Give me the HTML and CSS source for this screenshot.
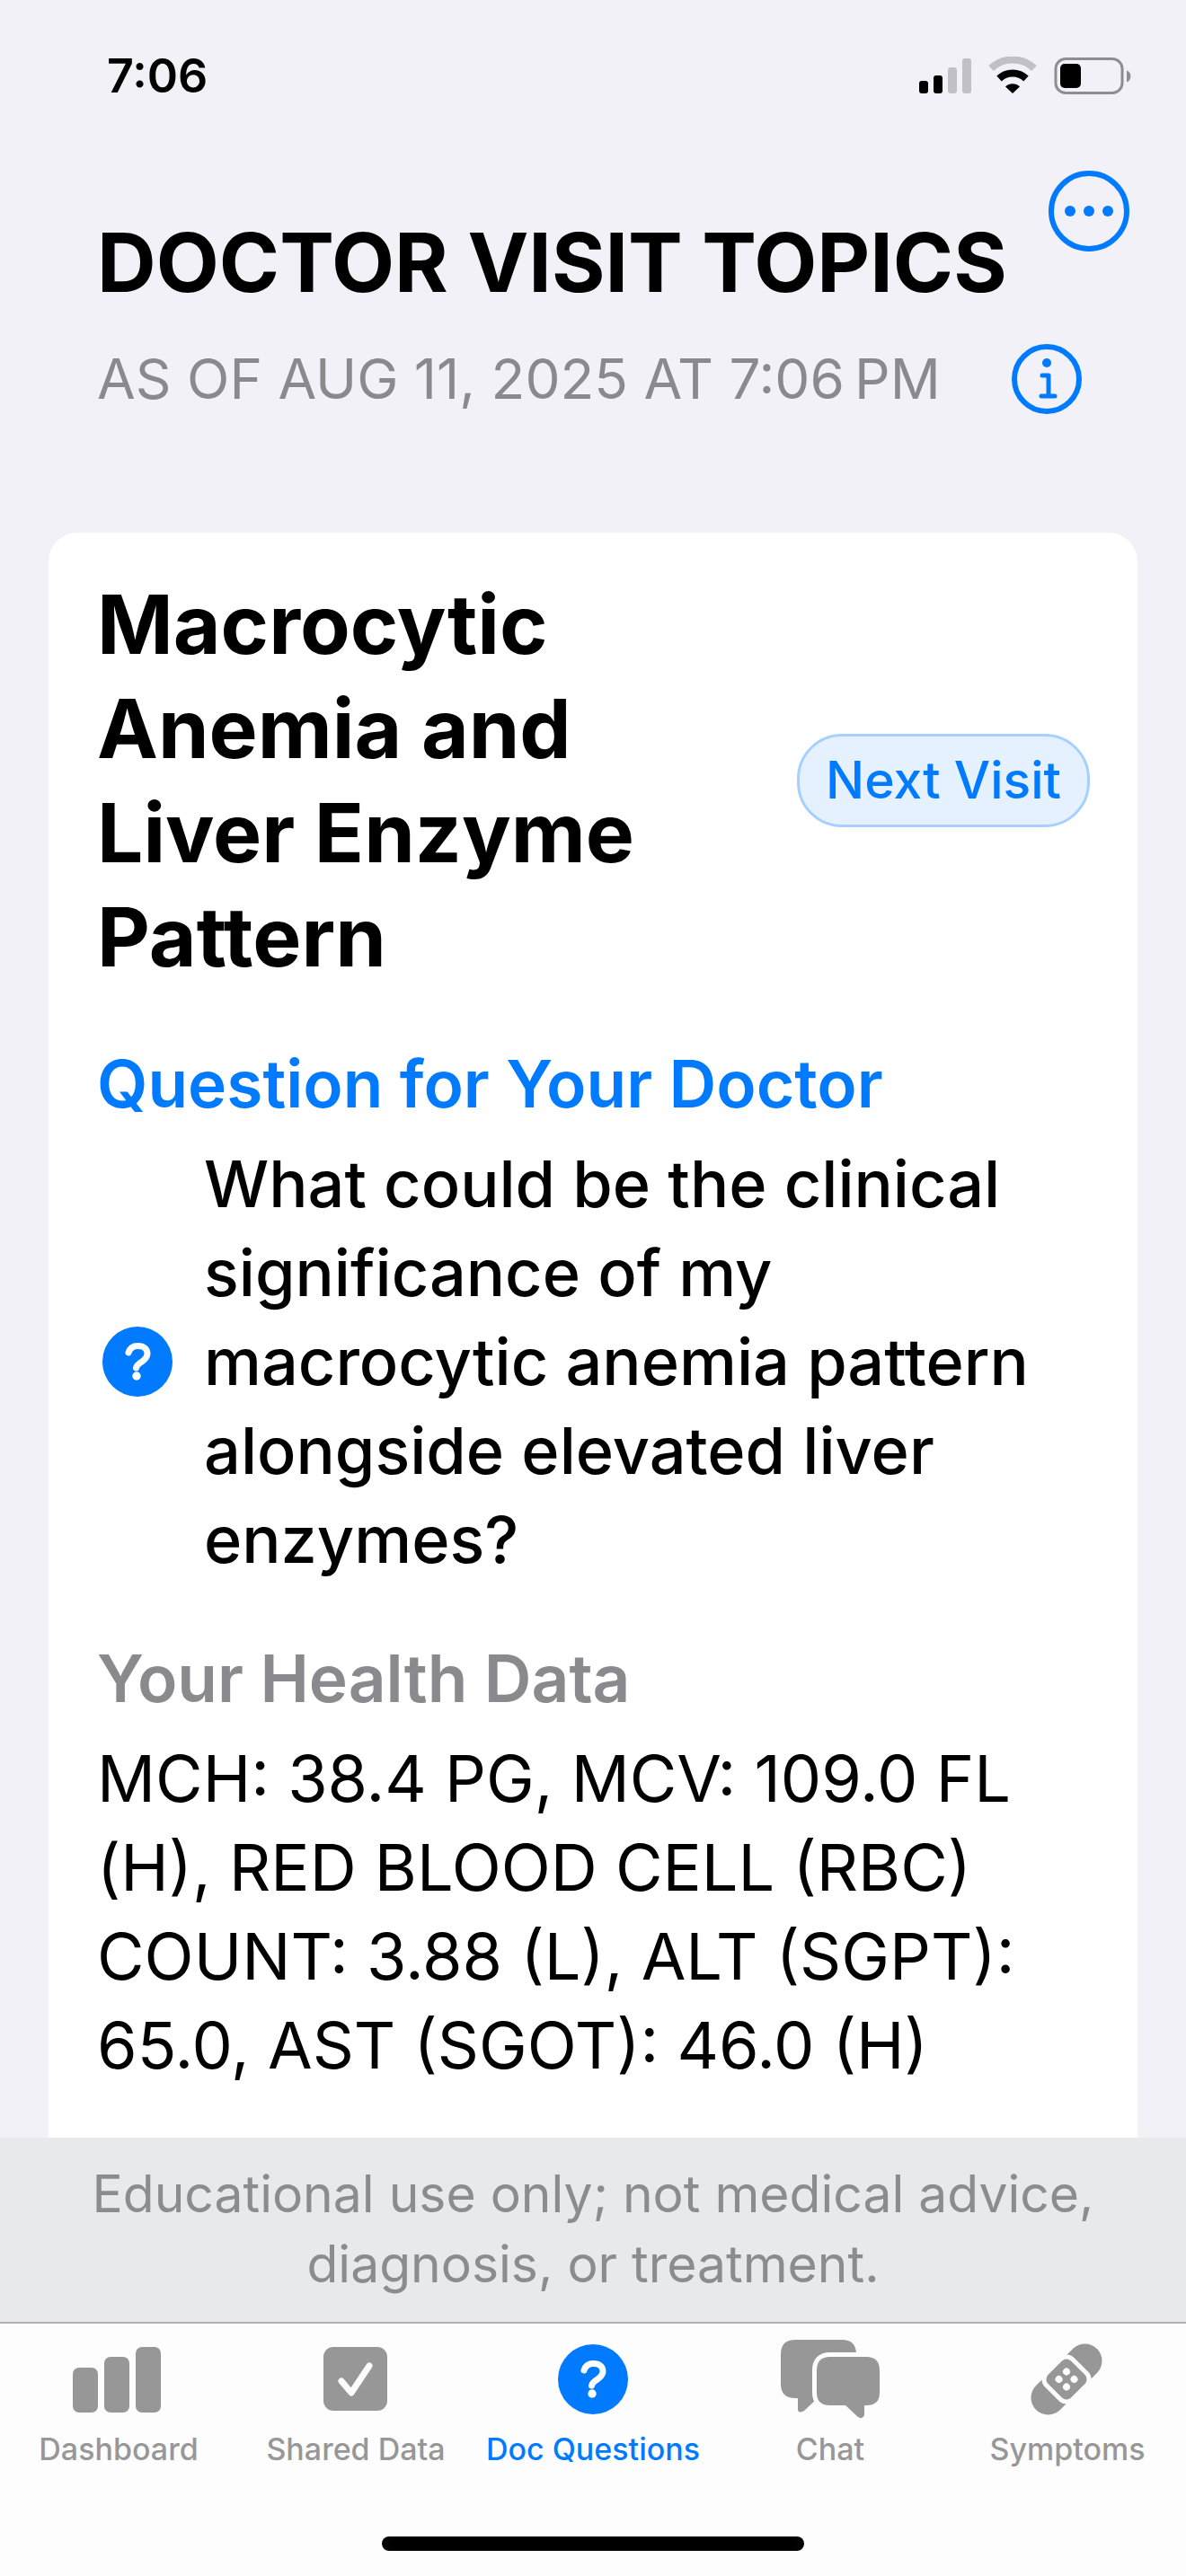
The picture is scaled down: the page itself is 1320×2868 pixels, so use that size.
FILE: index.html
```html
<!doctype html>
<html lang="en">
<head>
  <meta charset="utf-8"/>
  <title>Doctor Visit Topics</title>
  <meta name="viewport" content="width=device-width, initial-scale=1"/>
  <link rel="stylesheet" href="styles.css">
</head>
<body>
  <!-- status bar -->
  <div class="status">
    <time class="clock">7:06</time>
    <svg class="status-icons" viewBox="1023 62 236 43" role="img" aria-label="Signal, Wi-Fi, battery">
      <g>
        <rect x="1023" y="89" width="10" height="14" rx="3"/>
        <rect x="1039" y="83" width="10" height="20" rx="3"/>
        <rect class="dim" x="1055" y="74" width="10" height="29" rx="3"/>
        <rect class="dim" x="1071" y="64" width="10" height="39" rx="3"/>
      </g>
      <path class="arc dim-arc" d="M1103 75 A35 35 0 0 1 1151 75"/>
      <path class="arc" d="M1112 86.500 A22 22 0 0 1 1142 86.500"/>
      <path d="M1127 103 L1119 95.500 A11.500 11.500 0 0 1 1135 95.500 Z"/>
      <rect class="shell" x="1175" y="64.500" width="74" height="38" rx="11"/>
      <rect x="1180" y="70" width="23" height="27" rx="5"/>
      <path class="nub" d="M1254 77.500 A7 7 0 0 1 1254 90.500 Z"/>
    </svg>
  </div>

  <header class="header">
    <div class="title-row">
      <h1>DOCTOR VISIT TOPICS</h1>
      <button class="icon-btn more" aria-label="More options">
        <svg viewBox="0 0 90 90">
          <circle class="ring" cx="45" cy="45" r="42"/>
          <circle cx="24" cy="45" r="6"/>
          <circle cx="45" cy="45" r="6"/>
          <circle cx="66" cy="45" r="6"/>
        </svg>
      </button>
    </div>
    <div class="date-row">
      <p>AS OF AUG 11, 2025 AT 7:06&#8239;PM</p>
      <button class="icon-btn info" aria-label="Info">
        <svg viewBox="0 0 78 78">
          <circle class="ring" cx="39" cy="39" r="36"/>
          <circle cx="39" cy="21" r="5"/>
          <path class="stem" d="M34 35H41V58M33 58H48"/>
        </svg>
      </button>
    </div>
  </header>

  <main>
    <article class="card">
      <div class="topic">
        <h2>Macrocytic Anemia and Liver Enzyme Pattern</h2>
        <button class="pill">Next Visit</button>
      </div>

      <section>
        <h3 class="blue">Question for Your Doctor</h3>
        <div class="question">
          <svg viewBox="15 5 80 80" aria-hidden="true">
            <circle cx="55" cy="45" r="39"/>
            <path class="mark" d="M45 35C46.500 30 50 27.500 55.500 27.500C62 27.500 66 31 66 36C66 40 63.500 42.500 60 45C56 47.500 54 49 53.500 52"/>
            <circle class="dot" cx="54" cy="61" r="4.700"/>
          </svg>
          <p>What could be the clinical significance of my macrocytic anemia pattern alongside elevated liver enzymes?</p>
        </div>
      </section>

      <section>
        <h3>Your Health Data</h3>
        <p>MCH: 38.4 PG, MCV: 109.0 FL (H), RED BLOOD CELL (RBC) COUNT: 3.88 (L), ALT (SGPT): 65.0, AST (SGOT): 46.0 (H)</p>
      </section>
    </article>
  </main>

  <footer>
    <p class="disclaimer">Educational use only; not medical advice, diagnosis, or treatment.</p>

    <!-- tab bar -->
    <nav class="tabs">
      <a href="#dashboard">
        <svg viewBox="-1 -1 112 92">
          <rect x="4" y="32" width="28" height="50" rx="7"/>
          <rect x="39" y="20" width="28" height="62" rx="7"/>
          <rect x="74" y="9" width="28" height="73" rx="7"/>
        </svg>
        <span>Dashboard</span>
      </a>
      <a href="#shared">
        <svg viewBox="-1 -1 112 92">
          <rect x="19" y="9" width="71" height="71" rx="11"/>
          <path class="mark" d="M39 47L50 60L70 30"/>
        </svg>
        <span>Shared Data</span>
      </a>
      <a class="active" href="#questions" aria-current="page">
        <svg viewBox="-1 -1 112 92">
          <circle cx="55" cy="45" r="39"/>
          <path class="mark" d="M45 35C46.500 30 50 27.500 55.500 27.500C62 27.500 66 31 66 36C66 40 63.500 42.500 60 45C56 47.500 54 49 53.500 52"/>
          <circle class="dot" cx="54" cy="61" r="4.700"/>
        </svg>
        <span>Doc Questions</span>
      </a>
      <a href="#chat">
        <svg viewBox="-1 -1 112 92">
          <path d="M16 1H68Q84 1 84 17V50Q84 66 68 66H41L26 80Q19 84 19 78V66H16Q0 66 0 50V17Q0 1 16 1Z"/>
          <path class="halo" d="M55 20H95Q110 20 110 35V60Q110 74 95 74H93V85Q91 90 86 87L72 74H55Q40 74 40 60V35Q40 20 55 20Z"/>
          <path d="M55 20H95Q110 20 110 35V60Q110 74 95 74H93V85Q91 90 86 87L72 74H55Q40 74 40 60V35Q40 20 55 20Z"/>
        </svg>
        <span>Chat</span>
      </a>
      <a href="#symptoms">
        <svg viewBox="-1 -1 112 92">
          <g transform="translate(54 45) rotate(-45)">
            <rect x="-48" y="-19" width="96" height="38" rx="19"/>
            <rect class="halo" x="-18" y="-18" width="36" height="36" rx="7"/>
            <rect x="-18" y="-18" width="36" height="36" rx="7"/>
            <circle class="dot" cx="-6" cy="-6" r="4"/>
            <circle class="dot" cx="6" cy="-6" r="4"/>
            <circle class="dot" cx="-6" cy="6" r="4"/>
            <circle class="dot" cx="6" cy="6" r="4"/>
          </g>
        </svg>
        <span>Symptoms</span>
      </a>
    </nav>
    <div class="home"></div>
  </footer>
</body>
</html>
```
FILE: styles.css
```css
:root{
  --blue:#007aff;
  --gray:#8a8a8e;
  --tab:#979797;
  --bg:#f2f1f7;
  --bar:#fdfdfd;
}
*{box-sizing:border-box;margin:0;padding:0}
body{
  min-height:100vh;
  display:flex;
  flex-direction:column;
  background:var(--bg);
  color:#000;
  font-family:Inter,"Liberation Sans",sans-serif;
}
svg{display:block;fill:currentColor}
button{font:inherit;border:none;background:none;cursor:pointer}

/* ---------- STATUS BAR ---------- */
.status{
  display:flex;
  justify-content:space-between;
  align-items:center;
  height:168px;
  padding:0 61px 0 119px;
}
.clock{font-size:52px;font-weight:600}
.status-icons{width:236px}
.status-icons .dim{fill:#c1c0c5}
.status-icons .arc{fill:none;stroke:#000;stroke-width:8}
.status-icons .dim-arc{stroke:#c1c0c5}
.status-icons .shell{fill:none;stroke:#8e8e90;stroke-width:3}
.status-icons .nub{fill:#8e8e90}

/* ---------- HEADER ---------- */
.header{padding:22px 63px 0 108px}
.title-row,.date-row{display:flex;justify-content:space-between}
h1{margin-top:44px;font-size:91px;line-height:116px;font-weight:700}
.date-row{align-items:center;margin-top:32px;padding-right:53px}
.date-row p{font-size:62px;line-height:80px;color:var(--gray)}
.icon-btn{flex:none;color:var(--blue)}
.more{width:90px;height:90px}
.info{width:78px;height:78px}
.ring,.stem{fill:none;stroke:currentColor;stroke-width:6}
.stem{stroke-width:5;stroke-linecap:round;stroke-linejoin:round}

/* ---------- CARD ---------- */
main{flex:1;display:flex;margin-top:131px;padding:0 54px}
.card{
  flex:1;
  padding:44px 53px 40px 54px;
  background:#fff;
  border-radius:32px 32px 0 0;
  font-size:72px;
  line-height:99px;
}
.topic{display:flex;align-items:center;justify-content:space-between;gap:32px}
h2{font-size:91px;line-height:116px;font-weight:700}
h3{margin-bottom:12px;font-size:73px;line-height:99px;font-weight:600;color:var(--gray)}
h3.blue{color:var(--blue)}
section{margin-top:56px}
.pill{
  flex:none;
  padding:12px 29px;
  border:3px solid #a6d0ff;
  border-radius:50px;
  background:#e5f1ff;
  color:var(--blue);
  font-size:57px;
  line-height:74px;
  font-weight:500;
}
.question{display:flex;align-items:center;gap:34px;font-weight:500}
.question svg{flex:none;width:80px;margin-left:5px;color:var(--blue)}

/* icon cut-outs */
.mark{fill:none;stroke:var(--bar);stroke-width:7;stroke-linecap:round;stroke-linejoin:round}
.dot{fill:var(--bar)}
.halo{stroke:var(--bar);stroke-width:10}

/* ---------- FOOTER ---------- */
.disclaimer{
  padding:24px 60px 25px;
  background:#e8e9eb;
  color:#8b8c8e;
  font-size:57px;
  line-height:78px;
  text-align:center;
}
footer{background:var(--bar)}
.tabs{
  display:grid;
  grid-template-columns:repeat(5,1fr);
  padding-top:16px;
  border-top:2px solid #b0b0b2;
}
.tabs a{
  display:flex;
  flex-direction:column;
  align-items:center;
  gap:10px;
  color:var(--tab);
  font-size:34px;
  line-height:44px;
  font-weight:500;
  text-decoration:none;
  white-space:nowrap;
}
.tabs svg{width:112px}
.tabs .active{color:var(--blue)}
.home{width:470px;height:16px;margin:75px auto 28px;border-radius:8px;background:#000}
```
